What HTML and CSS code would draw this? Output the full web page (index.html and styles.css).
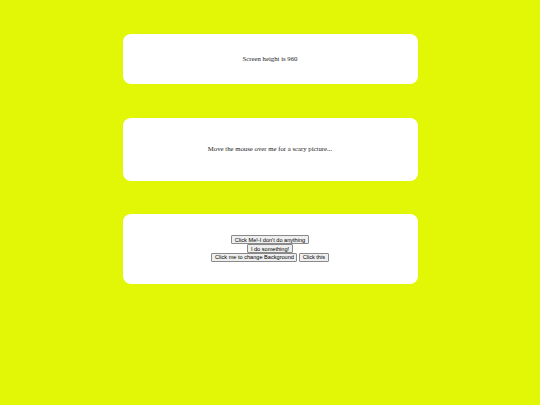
FILE: index.html
```html
<!DOCTYPE html>
<html>
<head>
<meta charset="utf-8">
<link rel="stylesheet" href="styles.css">
</head>
<body>
<div class="card">Screen height is 960</div>
<div class="card"><p>Move the mouse over me for a scary picture...</p></div>
<div class="card buttons">
<button class="btn">Click Me!-I don't do anything</button><br>
<button class="btn">I do something!</button><br>
<button class="btn">Click me to change Background</button> <button class="btn">Click this</button>
</div>
</body>
</html>
```
FILE: styles.css
```css
html, body {
  margin: 0;
  padding: 0;
}
body {
  background: #e2f706;
  height: 405px;
  overflow: hidden;
  padding-top: 0.1px;
}
.card {
  width: 295px;
  margin: 34px auto 0;
  background: #ffffff;
  border-radius: 8px;
  padding: 21px 0;
  text-align: center;
  font-family: "Liberation Serif", serif;
  font-size: 6.75px;
  line-height: 7.6px;
  color: #1e1e1e;
}
.card p {
  margin: 6.75px 0;
}
.buttons {
  margin-top: 33.5px;
  padding: 21px 0 22px;
  line-height: 8.2px;
}
.btn {
  font-family: "Liberation Sans", Arial, sans-serif;
  font-size: 5.6px;
  line-height: 6px;
  padding: 0.4px 2.5px;
  margin: 0;
  border: 0.8px solid #8a8a8a;
  border-radius: 1px;
  background: #efefef;
  color: #000000;
  vertical-align: middle;
}
```
